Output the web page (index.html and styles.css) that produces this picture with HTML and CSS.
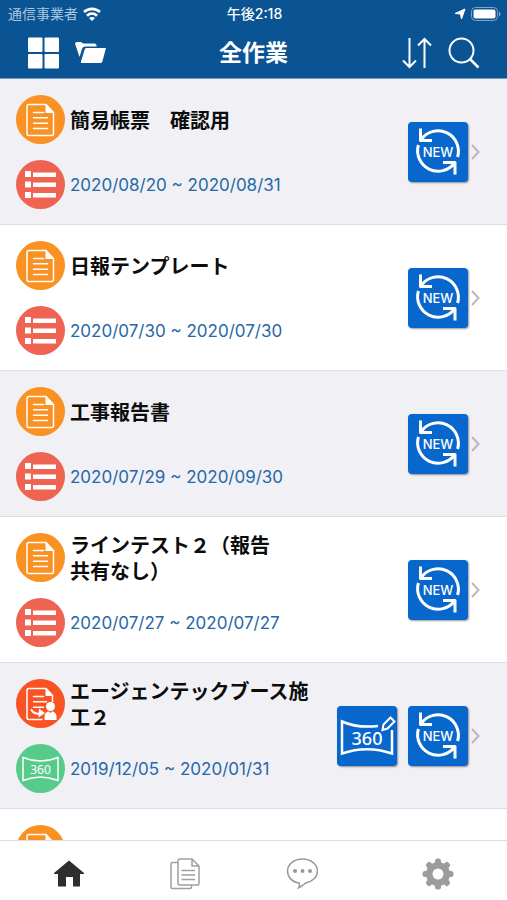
FILE: index.html
```html
<!DOCTYPE html>
<html lang="ja">
<head>
  <meta charset="UTF-8">
  <title>全作業</title>
  <meta name="viewport" content="width=device-width, initial-scale=1">
  <link rel="stylesheet" href="styles.css">
</head>
<body>

  <!-- shared icons -->
  <svg class="sprite" aria-hidden="true">
    <symbol id="icon-doc" viewBox="0 0 49 49">
      <g fill="none" stroke="#fff" stroke-width="1.5" stroke-linejoin="round">
        <path d="M13 9.500h17l7.500 8V38.500a2 2 0 0 1-2 2H13a2 2 0 0 1-2-2V11.500a2 2 0 0 1 2-2z"/>
        <path d="M17.500 17.500h10M17.500 22.800h14M17.500 28.200h14M17.500 33.500h14" stroke-linecap="round"/>
      </g>
      <path d="M29.500 9l8.500 9h-8.500z" fill="#fff"/>
    </symbol>
    <symbol id="icon-list" viewBox="0 0 49 49">
      <path fill="#fff" d="M9 11h6v6H9zM17 12.500h23V17H17zM9 21.500h6v6H9zM17 22.500h23V27H17zM9 32h6v6H9zM17 33h23v4.500H17z"/>
    </symbol>
    <symbol id="icon-share" viewBox="0 0 49 49">
      <g fill="none" stroke="#fff" stroke-width="1.500" stroke-linejoin="round" stroke-linecap="round">
        <path d="M26 40.500H13a2 2 0 0 1-2-2V11.500a2 2 0 0 1 2-2h17l6.500 7v6"/>
        <path d="M17.500 17.500h10M17.500 22.800h13M17.500 28.200h10"/>
        <path d="M15.500 31c1.500 3 4.500 4 9 4" stroke-width="2"/>
      </g>
      <path d="M29.500 9l7.500 8h-7.500z" fill="#fff"/>
      <path d="M23 29.500l6 4.500-6.500 4.500z" fill="#fff"/>
      <circle cx="34.500" cy="27.500" r="4.500" fill="#fff"/>
      <path d="M28.500 41v-3.500c0-3 2-5 4.500-5l1.500 1.500 1.500-1.500c2.500 0 4.500 2 4.500 5V41z" fill="#fff"/>
    </symbol>
    <symbol id="icon-new" viewBox="0 0 60 60">
      <g fill="none" stroke="#fff" stroke-width="3" stroke-linejoin="round">
        <path d="M13.500 17A20.500 20.500 0 0 1 49.600 35"/>
        <path d="M10.400 23A20.500 20.500 0 0 0 46.500 41"/>
        <path d="M12.500 6.500v12h11.500M35 40.500h12V52.500"/>
      </g>
    </symbol>
    <symbol id="icon-chevron" viewBox="0 0 9 16">
      <path d="M1 1l6.500 7L1 15" fill="none" stroke="#b9b9bd" stroke-width="2"/>
    </symbol>
  </svg>

  <header>
    <div class="status">
      <div class="carrier">
        <span>通信事業者</span>
        <svg width="18" height="14" viewBox="0 0 18 14" fill="none" stroke="#fff" stroke-width="2.800">
          <path d="M1 5c4.500-4.200 11.500-4.200 16 0M4 8.700c3-2.800 7-2.800 10 0"/>
          <path d="M9 14l-3-3c1.700-1.300 4.300-1.300 6 0z" fill="#fff" stroke="none"/>
        </svg>
      </div>
      <div class="time">午後2:18</div>
      <div class="battery">
        <svg width="12" height="12" viewBox="0 0 12 12"><path d="M11 1L7.500 11 6.500 6 1 5.500z" fill="#fff" stroke="#fff" stroke-linejoin="round"/></svg>
        <svg width="30" height="14" viewBox="0 0 30 14">
          <rect x=".5" y=".5" width="26" height="13" rx="4" fill="none" stroke="#7fa6cb"/>
          <rect x="2.500" y="2.500" width="22" height="9" rx="2" fill="#fff"/>
          <path d="M28 4.500c2 .5 2 4.500 0 5z" fill="#7fa6cb"/>
        </svg>
      </div>
    </div>
    <div class="toolbar">
      <div class="tools">
        <button type="button" aria-label="一覧">
          <svg width="32" height="32" viewBox="0 0 32 32" fill="#fff">
            <rect x="1" y=".5" width="14.500" height="14.500" rx="1"/><rect x="17.500" y=".5" width="14.500" height="14.500" rx="1"/>
            <rect x="1" y="17" width="14.500" height="14.500" rx="1"/><rect x="17.500" y="17" width="14.500" height="14.500" rx="1"/>
          </svg>
        </button>
        <button type="button" aria-label="フォルダ">
          <svg width="32" height="32" viewBox="0 0 32 32" fill="#fff">
            <path d="M0 6.500L1.500 5h4.500l2 1.500h12L21.500 8v1.500H10.500c-2 0-2.800.8-3.500 2.500L4.500 20z"/>
            <path d="M12 11h19L27.500 24c-.5 1.500-1 2-2.500 2H7c-1 0-1.300-.5-1-1.500l3.500-11.500c.4-1.400 1-2 2.500-2z"/>
          </svg>
        </button>
      </div>
      <h1>全作業</h1>
      <div class="tools tools-right">
        <button type="button" aria-label="並べ替え">
          <svg width="30" height="32" viewBox="0 0 30 32" fill="none" stroke="#fff" stroke-width="2">
            <path d="M7.500 1v29M1 23.500l6.500 6.500 6.500-6.500M22.500 31V2M16 8.500L22.500 2 29 8.500"/>
          </svg>
        </button>
        <button type="button" aria-label="検索">
          <svg width="32" height="32" viewBox="0 0 32 32" fill="none" stroke="#fff" stroke-width="2">
            <circle cx="13.500" cy="13.500" r="12"/><path d="M22 22l8.500 8.500" stroke-width="2.500"/>
          </svg>
        </button>
      </div>
    </div>
  </header>

  <main>
    <ul class="jobs">
      <li class="job">
        <svg class="badge orange"><use href="#icon-doc"/></svg>
        <h2>簡易帳票　確認用</h2>
        <svg class="badge red"><use href="#icon-list"/></svg>
        <p class="date">2020/08/20 ~ 2020/08/31</p>
        <div class="actions">
          <button class="action" type="button">
            <svg viewBox="0 0 60 60"><use href="#icon-new"/><text class="new-text" x="30" y="35" text-anchor="middle">NEW</text></svg>
          </button>
          <a class="more" href="#" aria-label="詳細"><svg width="9" height="16"><use href="#icon-chevron"/></svg></a>
        </div>
      </li>
      <li class="job">
        <svg class="badge orange"><use href="#icon-doc"/></svg>
        <h2>日報テンプレート</h2>
        <svg class="badge red"><use href="#icon-list"/></svg>
        <p class="date">2020/07/30 ~ 2020/07/30</p>
        <div class="actions">
          <button class="action" type="button">
            <svg viewBox="0 0 60 60"><use href="#icon-new"/><text class="new-text" x="30" y="35" text-anchor="middle">NEW</text></svg>
          </button>
          <a class="more" href="#" aria-label="詳細"><svg width="9" height="16"><use href="#icon-chevron"/></svg></a>
        </div>
      </li>
      <li class="job">
        <svg class="badge orange"><use href="#icon-doc"/></svg>
        <h2>工事報告書</h2>
        <svg class="badge red"><use href="#icon-list"/></svg>
        <p class="date">2020/07/29 ~ 2020/09/30</p>
        <div class="actions">
          <button class="action" type="button">
            <svg viewBox="0 0 60 60"><use href="#icon-new"/><text class="new-text" x="30" y="35" text-anchor="middle">NEW</text></svg>
          </button>
          <a class="more" href="#" aria-label="詳細"><svg width="9" height="16"><use href="#icon-chevron"/></svg></a>
        </div>
      </li>
      <li class="job">
        <svg class="badge orange"><use href="#icon-doc"/></svg>
        <h2>ラインテスト２（報告<br>共有なし）</h2>
        <svg class="badge red"><use href="#icon-list"/></svg>
        <p class="date">2020/07/27 ~ 2020/07/27</p>
        <div class="actions">
          <button class="action" type="button">
            <svg viewBox="0 0 60 60"><use href="#icon-new"/><text class="new-text" x="30" y="35" text-anchor="middle">NEW</text></svg>
          </button>
          <a class="more" href="#" aria-label="詳細"><svg width="9" height="16"><use href="#icon-chevron"/></svg></a>
        </div>
      </li>
      <li class="job">
        <svg class="badge vermilion"><use href="#icon-share"/></svg>
        <h2>エージェンテックブース施<br>工２</h2>
        <svg class="badge green" viewBox="0 0 49 49">
          <path d="M7 13.500c11 4.500 24 4.500 35 0v23c-11-4.500-24-4.500-35 0z" fill="none" stroke="#fff" stroke-width="1.500"/>
          <text class="pano-text" x="24.500" y="30" text-anchor="middle">360</text>
        </svg>
        <p class="date">2019/12/05 ~ 2020/01/31</p>
        <div class="actions">
          <button class="action" type="button">
            <svg viewBox="0 0 60 60">
              <g fill="none" stroke="#fff" stroke-width="2.500">
                <path d="M41 20c-13 1.500-26 0-36-4.500v32c16-5.500 34-5.500 50 0V24"/>
                <path d="M45.500 24l1-5.500 7-7 4 4-7 7z" stroke-width="2"/>
              </g>
              <text class="pano-edit-text" x="30" y="39" text-anchor="middle">360</text>
            </svg>
          </button>
          <button class="action" type="button">
            <svg viewBox="0 0 60 60"><use href="#icon-new"/><text class="new-text" x="30" y="35" text-anchor="middle">NEW</text></svg>
          </button>
          <a class="more" href="#" aria-label="詳細"><svg width="9" height="16"><use href="#icon-chevron"/></svg></a>
        </div>
      </li>
      <li class="job">
        <svg class="badge orange"><use href="#icon-doc"/></svg>
      </li>
    </ul>
  </main>

  <nav>
    <a href="#" aria-label="ホーム">
      <svg width="30" height="32" viewBox="0 0 30 32" fill="#2e2e2e">
        <path d="M15 2.500l15 12.500v1h-4v12.500h-7V19h-7v9.500H4V16H0v-1z"/>
      </svg>
    </a>
    <a href="#" aria-label="書類">
      <svg width="30" height="32" viewBox="0 0 30 32" fill="none" stroke="#a0a0a0" stroke-width="1.500">
        <path d="M8 4.500H2.500A1.500 1.500 0 0 0 1 6v23a1.500 1.500 0 0 0 1.500 1.500H20A1.500 1.500 0 0 0 21.500 29v-2"/>
        <path d="M9.500 1H22l7 7v17.500a1.500 1.500 0 0 1-1.500 1.500h-18A1.500 1.500 0 0 1 8 25.500v-23A1.500 1.500 0 0 1 9.500 1zM22 1v7h7"/>
        <path d="M11.500 12.500h13.500M11.500 17h13.500M11.500 21.500h13.500"/>
      </svg>
    </a>
    <a href="#" aria-label="メッセージ">
      <svg width="32" height="32" viewBox="0 0 32 32" fill="none" stroke="#999" stroke-width="1.500">
        <path d="M13 25C6 24 1.500 19 1.500 13 1.500 6.500 8 1 16.500 1s15 5.500 15 12c0 6-5 10.500-12 12-2 2-4 3.800-7 4.800 1-1.500 1.300-3 .5-4.800z"/>
        <g fill="#999" stroke="none"><circle cx="9" cy="13" r="2"/><circle cx="16.500" cy="13" r="2"/><circle cx="24" cy="13" r="2"/></g>
      </svg>
    </a>
    <a href="#" aria-label="設定">
      <svg width="32" height="32" viewBox="0 0 32 32">
        <g fill="#9c9c9c">
          <circle cx="16" cy="16" r="12"/>
          <g id="teeth">
            <rect x="13" y="0.500" width="6" height="31" rx="2.500"/>
            <rect x="0.500" y="13" width="31" height="6" rx="2.500"/>
          </g>
          <use href="#teeth" transform="rotate(45 16 16)"/>
        </g>
        <circle cx="16" cy="16" r="5.500" fill="#fff"/>
      </svg>
    </a>
  </nav>

</body>
</html>
```

FILE: styles.css
```css
* {
  box-sizing: border-box;
}
body {
  font-family: Inter, "Noto Sans CJK JP", sans-serif;
  margin: 0;
  height: 100vh;
  display: flex;
  flex-direction: column;
  background-color: #fff;
  color: #0c0c0c;
}
h1, h2, p, ul {
  margin: 0;
  padding: 0;
}
svg {
  display: block;
}
.sprite {
  position: absolute;
  width: 0;
  height: 0;
}
button {
  padding: 0;
  border: none;
  background: none;
  cursor: pointer;
}
header {
  flex: none;
  background-color: #0a5494;
  border-bottom: 1px solid #6f9cc4;
  color: white;
}
.status {
  display: grid;
  grid-template-columns: 1fr auto 1fr;
  align-items: center;
  height: 27px;
  padding: 0 6px 0 8px;
  font-size: 14px;
  line-height: 20px;
}
.carrier {
  display: flex;
  align-items: center;
  gap: 5px;
  color: #a9c5df;
}
.time {
  font-weight: 500;
}
.battery {
  display: flex;
  align-items: center;
  justify-content: flex-end;
  gap: 5px;
}
.toolbar {
  display: grid;
  grid-template-columns: 1fr auto 1fr;
  align-items: center;
  height: 51px;
  padding: 0 27px;
}
.toolbar h1 {
  font-size: 23px;
  line-height: 30px;
  font-weight: 700;
}
.tools {
  display: flex;
  gap: 16px;
}
.tools-right {
  justify-content: flex-end;
}
main {
  flex: 1;
  min-height: 0;
  overflow-y: auto;
  scrollbar-width: none;
}
.jobs {
  list-style: none;
}
.job {
  display: grid;
  grid-template-columns: 49px 1fr auto;
  grid-template-rows: 49px 49px;
  column-gap: 5px;
  row-gap: 16px;
  align-items: center;
  padding: 16px 27px 15px 16px;
  border-bottom: 1px solid #dedee2;
}
.job:nth-child(odd) {
  background-color: #f0f0f5;
}
.badge {
  width: 49px;
  height: 49px;
  border-radius: 50%;
}
.orange {
  background-color: #f99123;
}
.red {
  background-color: #ee6352;
}
.vermilion {
  background-color: #f95324;
}
.green {
  background-color: #57cc8a;
}
.job h2 {
  grid-column: 2;
  font-family: "Noto Sans CJK JP", sans-serif;
  font-size: 20px;
  line-height: 26px;
  font-weight: 700;
  white-space: nowrap;
}
.date {
  grid-column: 2;
  color: #2768a6;
  font-size: 17px;
  line-height: 24px;
}
.actions {
  grid-column: 3;
  grid-row: 1 / 3;
  display: flex;
  align-items: center;
  gap: 11px;
}
.action {
  width: 60px;
  height: 60px;
  border-radius: 4px;
  background-color: #0867cc;
  box-shadow: 1px 1px 2px rgba(0,0,0,0.4);
}
.action svg {
  width: 60px;
  height: 60px;
}
.more {
  margin-left: -8px;
}
.new-text {
  font: 500 13px Inter, sans-serif;
  fill: white;
}
.pano-text {
  font: 12px "Noto Sans", sans-serif;
  fill: white;
}
.pano-edit-text {
  font: 500 18px "Noto Sans", sans-serif;
  fill: white;
}
nav {
  flex: none;
  display: flex;
  align-items: center;
  gap: 17vw;
  height: 60px;
  padding: 6px 53px 0 54px;
  border-top: 1px solid #dcdcdc;
  background-color: #fff;
}
nav a:last-child {
  margin-left: auto;
}
```
